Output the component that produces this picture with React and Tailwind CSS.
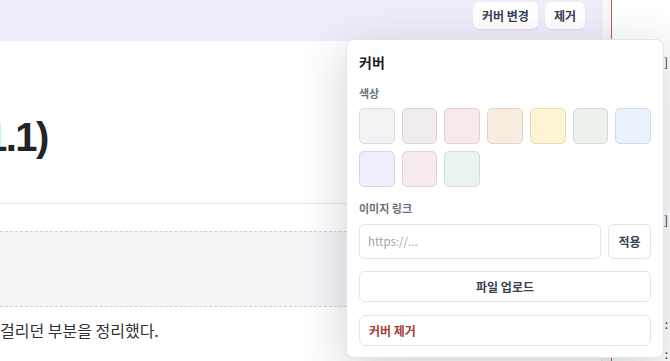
import React from "react"

const font = { fontFamily: '"Noto Sans CJK KR", "Noto Sans", sans-serif' }

const swatches = [
  ["bg-[#f1f2f4]", "border-[#d9dce1]"],
  ["bg-[#f2ecec]", "border-[#ddd5d5]"],
  ["bg-[#f8eaea]", "border-[#e3d3d3]"],
  ["bg-[#f8ebdf]", "border-[#e5d5c6]"],
  ["bg-[#fcf4d2]", "border-[#e8dcb2]"],
  ["bg-[#edf1ec]", "border-[#d5dbd4]"],
  ["bg-[#eaf2fc]", "border-[#d0dbe8]"],
  ["bg-[#f1edfb]", "border-[#d9d3e8]"],
  ["bg-[#f7e9f0]", "border-[#e3d2dc]"],
  ["bg-[#eaf3f1]", "border-[#d2dedb]"],
]

function CoverPopover() {
  return (
    <div className="absolute left-[346px] top-[39px] w-[318px] rounded-lg border border-[#e3e4e8] bg-white px-3 pt-3 pb-[11px] shadow-[0_12px_48px_rgba(15,23,42,0.2)]">
      <div className="text-[14px] leading-5 font-bold text-[#1f2328]">커버</div>
      <div className="mt-[13px] text-[11px] leading-4 font-bold text-[#6b7280]">색상</div>
      <div className="mt-[7px] grid grid-cols-7 gap-[7px]">
        {swatches.map(([bg, border], i) => (
          <div key={i} className={`h-9 rounded-[5px] border ${bg} ${border}`}></div>
        ))}
      </div>
      <div className="mt-[13px] text-[11px] leading-4 font-bold text-[#6b7280]">이미지 링크</div>
      <div className="mt-[8px] flex gap-[7px]">
        <div className="flex h-[35px] flex-1 items-center rounded-md border border-[#e3e4ea] px-2 text-[11.5px] text-[#a1a5ad]">
          https://...
        </div>
        <div className="flex h-[35px] w-[43px] items-center justify-center rounded-md border border-[#e3e4ea] text-[12px] font-semibold text-[#374151]">
          적용
        </div>
      </div>
      <div className="mt-[12px] flex h-[31px] items-center justify-center rounded-md border border-[#e3e4ea] text-[12px] font-semibold text-[#374151]">
        파일 업로드
      </div>
      <div className="mt-[13px] flex h-[31px] items-center rounded-md border border-[#e3e4ea] px-[9px] text-[12px] font-semibold text-[#a23d33]">
        커버 제거
      </div>
    </div>
  )
}

export default function App() {
  return (
    <div className="relative flex h-[361px] w-[670px] overflow-hidden bg-white" style={font}>
      <div className="flex w-[601px] shrink-0 flex-col">
        <div className="flex h-[41px] items-start justify-end gap-[7px] bg-[#f0edfb] pt-[2px] pr-[16px]">
          <div className="flex h-[27px] items-center rounded-md bg-white px-[9px] text-[12px] font-semibold text-[#374151] shadow-[0_1px_2px_rgba(0,0,0,0.08)]">
            커버 변경
          </div>
          <div className="flex h-[27px] items-center rounded-md bg-white px-[9px] text-[12px] font-semibold text-[#374151] shadow-[0_1px_2px_rgba(0,0,0,0.08)]">
            제거
          </div>
        </div>
        <div
          className="mt-[72px] -ml-[15px] whitespace-nowrap text-[40px] leading-[48px] font-bold tracking-[-1.5px] text-[#222428]"
          style={{ fontFamily: '"Liberation Sans", Arial, sans-serif' }}
        >
          1.1)
        </div>
        <div className="mt-[42px] h-px bg-[#e4e5e8]"></div>
        <div className="mt-[27px] h-[76px] border-y border-dashed border-[#cdd3db] bg-[#f4f5f7]"></div>
        <div className="mt-[11px] whitespace-nowrap text-[16px] leading-6 text-[#2f3237]">
          걸리던 부분을 정리했다.
        </div>
      </div>
      <div className="w-px shrink-0 bg-[#e2e4ea]"></div>
      <div className="w-[9px] shrink-0 bg-[#f6f8fa]"></div>
      <div className="w-px shrink-0 bg-[#c4574f]"></div>
      <div className="flex flex-1 flex-col items-end pr-[2px] text-[12px] leading-4 text-[#2a2a3a]">
        <span className="mt-[54px]">]</span>
        <span className="mt-[48px] h-[2px] w-[4px] bg-[#d9813a]"></span>
        <span className="mt-[60px] h-[3px] w-px bg-[#6b3fa0]"></span>
        <span className="mt-[34px]">]</span>
        <span className="mt-[88px]">:</span>
        <span className="mt-[14px]">:</span>
      </div>
      <CoverPopover />
    </div>
  )
}
